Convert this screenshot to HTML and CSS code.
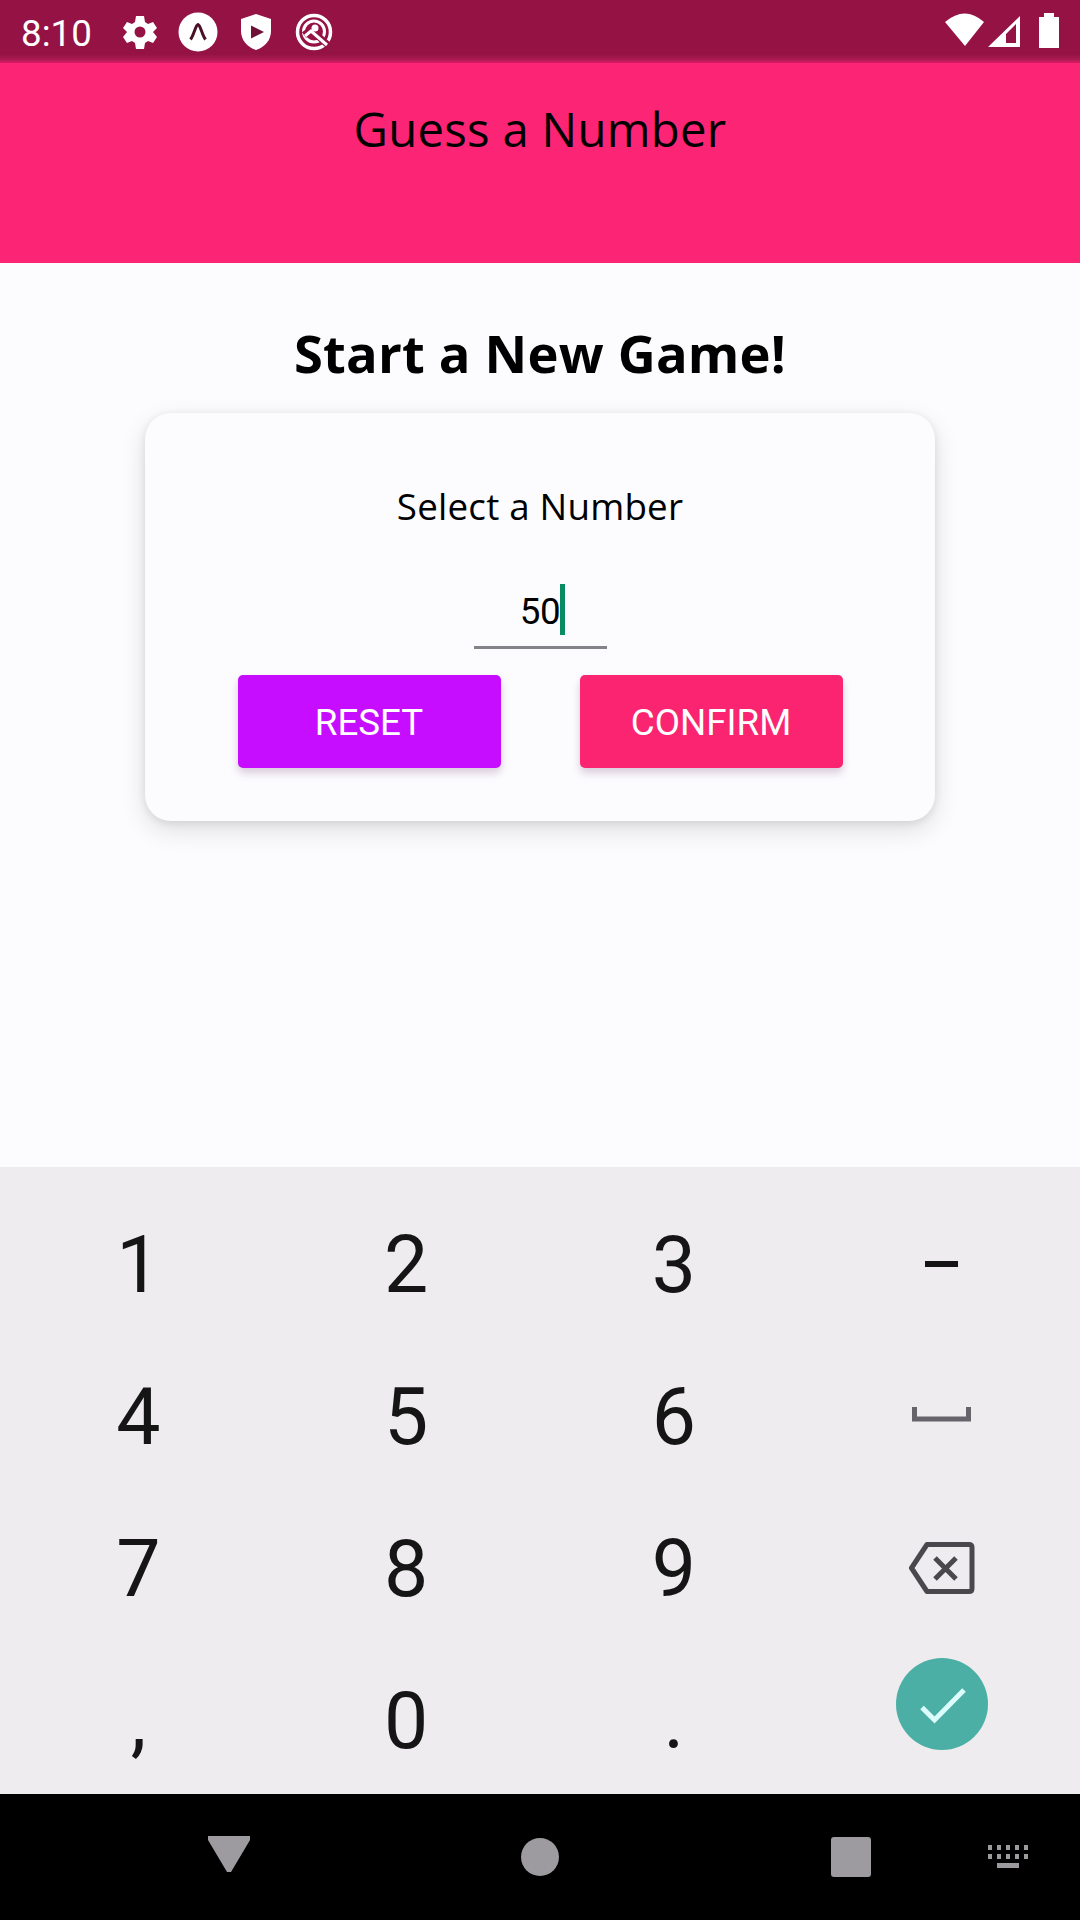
FILE: index.html
```html
<!DOCTYPE html>
<html lang="en">
<head>
<meta charset="utf-8">
<title>Guess a Number</title>
<link rel="stylesheet" href="styles.css">
</head>
<body>
<div class="screen">
  <div class="status-bar">
    <span class="clock">8:10</span>
    <svg class="notification" viewBox="0 0 42 42"><path fill="#fff" fill-rule="evenodd" d="M17 5h8l1 6 3 2 5-2 4 6-4 4 4 5-4 6-5-2-3 2-1 6h-8l-1-6-3-2-5 2-4-6 4-5-4-4 4-6 5 2 3-2zM21 15.5a5.500 5.500 0 1 0 0 11a5.500 5.500 0 1 0 0-11z"/></svg>
    <svg class="notification" viewBox="0 0 42 42"><circle cx="21" cy="21" r="19.500" fill="#fff"/><path d="M13.500 28.500C17 24 18.500 14 21 13.500C23.500 14 25 24 28.500 28.500" fill="none" stroke="#4a1028" stroke-width="3"/></svg>
    <svg class="notification" viewBox="0 0 42 42"><path fill="#fff" d="M21 3l15 5v12c0 9-6 16-15 19C12 36 6 29 6 20V8z"/><path fill="#6d1236" d="M16 14.500l13 6.500-13 6.500z"/></svg>
    <svg class="notification" viewBox="0 0 42 42"><circle cx="21" cy="21" r="16.500" fill="none" stroke="#fff" stroke-width="3.500"/><circle cx="21" cy="20.500" r="10.500" fill="none" stroke="#fff" stroke-width="3"/><path d="M11 24l7-5 17 15" fill="none" stroke="#941244" stroke-width="7"/><path d="M12 25l6-5 16 14" fill="none" stroke="#fff" stroke-width="3"/><circle cx="22" cy="17" r="3.500" fill="#fff"/></svg>
    <svg class="signals" viewBox="0 0 116 36"><path fill="#fff" d="M0 9Q20-8 39 9L20 33z"/><path fill="#fff" fill-rule="evenodd" d="M43 34L75 3v31zM61 30h10V11L61 21z"/><path fill="#fff" d="M94 4h5V0h10v4h5v31H94z"/></svg>
  </div>
  <header class="app-header"><h1 class="title">Guess a Number</h1></header>
  <main class="content">
    <h2 class="heading">Start a New Game!</h2>
    <section class="card">
      <p class="label">Select a Number</p>
      <div class="input"><span class="value">50</span><i class="caret"></i></div>
      <div class="actions">
        <button class="button reset">RESET</button>
        <button class="button confirm">CONFIRM</button>
      </div>
    </section>
  </main>
  <div class="keypad">
    <div class="key">1</div><div class="key">2</div><div class="key">3</div><div class="key"><svg class="minus" width="33" height="6"><path fill="#151515" d="M0 0h33v6H0z"/></svg></div>
    <div class="key">4</div><div class="key">5</div><div class="key">6</div><div class="key"><svg class="space" width="59" height="15"><path d="M2.500 0v12h54V0" fill="none" stroke="#66646a" stroke-width="5"/></svg></div>
    <div class="key">7</div><div class="key">8</div><div class="key">9</div><div class="key"><svg class="backspace" width="66" height="52" viewBox="0 0 66 52"><path d="M18 2.500h42q3 0 3 3v41q0 3-3 3H18L2.500 26z" fill="none" stroke="#4b484d" stroke-width="5" stroke-linejoin="round"/><path d="M26 16l21 21M47 16L26 37" stroke="#4b484d" stroke-width="5"/></svg></div>
    <div class="key">,</div><div class="key">0</div><div class="key">.</div><div class="key"><svg class="done" width="92" height="92"><circle cx="46" cy="46" r="46" fill="#4bafa5"/><path d="M26 49.500L38.500 62 68 32" fill="none" stroke="#dcfdfb" stroke-width="5"/></svg></div>
  </div>
  <nav class="nav-bar">
    <svg class="back" width="42" height="36"><path d="M0 0h42v4L23 36h-4L0 4z"/></svg>
    <svg class="home" width="38" height="38"><circle cx="19" cy="19" r="19"/></svg>
    <svg class="recent" width="40" height="40"><rect width="40" height="40" rx="3"/></svg>
    <svg class="keyboard" width="40" height="24"><path d="M0 0h4v5H0zM9 0h4v5H9zM18 0h4v5h-4zM27 0h4v5h-4zM36 0h4v5h-4zM0 9h4v5H0zM9 9h4v5H9zM18 9h4v5h-4zM27 9h4v5h-4zM36 9h4v5h-4zM9 18h22v5H9z"/></svg>
  </nav>
</div>
</body>
</html>
```
FILE: styles.css
```css
* { box-sizing: border-box; }
body { margin: 0; }
h1, h2, p { margin: 0; font-weight: 400; }
svg { display: block; flex: none; }

.screen {
  width: 1080px;
  height: 1920px;
  display: flex;
  flex-direction: column;
  overflow: hidden;
  background: #fcfcfe;
  color: #000;
  font-family: "Open Sans", sans-serif;
}

.status-bar {
  height: 63px;
  display: flex;
  align-items: flex-start;
  gap: 16px;
  padding: 11px 19px 0 21px;
  background: linear-gradient(#941244 0 54px, #a81a50 59px, #d91d65 63px);
}
.clock {
  width: 82px;
  padding-top: 1px;
  color: #fff;
  font: 36.75px/43px Roboto, sans-serif;
}
.notification { width: 42px; height: 42px; }
.signals { width: 116px; height: 36px; margin: 2px 0 0 auto; }

.app-header {
  height: 200px;
  padding-top: 34px;
  background: #fb2475;
  text-align: center;
}
.title { font-size: 47.25px; line-height: 64px; letter-spacing: .3px; }

.content {
  height: 904px;
  display: flex;
  flex-direction: column;
  align-items: center;
  padding-top: 54px;
}
.heading { font-size: 52.5px; line-height: 71px; font-weight: 700; letter-spacing: .2px; }

.card {
  width: 790px;
  height: 408px;
  margin-top: 25px;
  padding-top: 68px;
  display: flex;
  flex-direction: column;
  align-items: center;
  border-radius: 26px;
  background: #fcfcfe;
  box-shadow: 0 9px 26px rgba(0, 0, 0, .12), 0 2px 8px rgba(0, 0, 0, .09);
}
.label { font-size: 36.75px; line-height: 50px; letter-spacing: .2px; }

.input {
  width: 133px;
  height: 65px;
  margin-top: 53px;
  display: flex;
  justify-content: center;
  border-bottom: 3px solid #858389;
  font: 36.75px/51px Roboto, sans-serif;
  letter-spacing: -.5px;
}
.value { padding-top: 2px; }
.caret { width: 5px; height: 51px; margin-right: -5px; background: #0b8b61; }

.actions { display: flex; gap: 79px; margin-top: 26px; }
.button {
  width: 263px;
  height: 93px;
  padding: 2px 0 0;
  border: 0;
  border-radius: 5px;
  color: #fff;
  font: 36.75px/91px Roboto, sans-serif;
  box-shadow: 0 5px 8px rgba(80, 0, 80, .2);
}
.reset { background: #c60dff; }
.confirm { background: #fb2470; }

.keypad {
  height: 627px;
  display: grid;
  grid-template-columns: repeat(4, 267.7px);
  grid-auto-rows: 152px;
  justify-content: center;
  padding-top: 22px;
  background: #eeecef;
  color: #151515;
  font: 78.75px/152px Roboto, sans-serif;
}
.key { display: flex; align-items: center; justify-content: center; }
.minus { margin-bottom: 2px; }
.space { margin-bottom: 5px; }
.backspace { margin-bottom: 2px; }
.done { margin-bottom: 35px; }

.nav-bar {
  height: 126px;
  display: flex;
  align-items: center;
  padding-left: 208px;
  background: #000;
  fill: #9d9b9f;
}
.back { margin-bottom: 6px; }
.home { margin-left: 271px; }
.recent { margin-left: 272px; }
.keyboard { margin-left: 117px; }
```
